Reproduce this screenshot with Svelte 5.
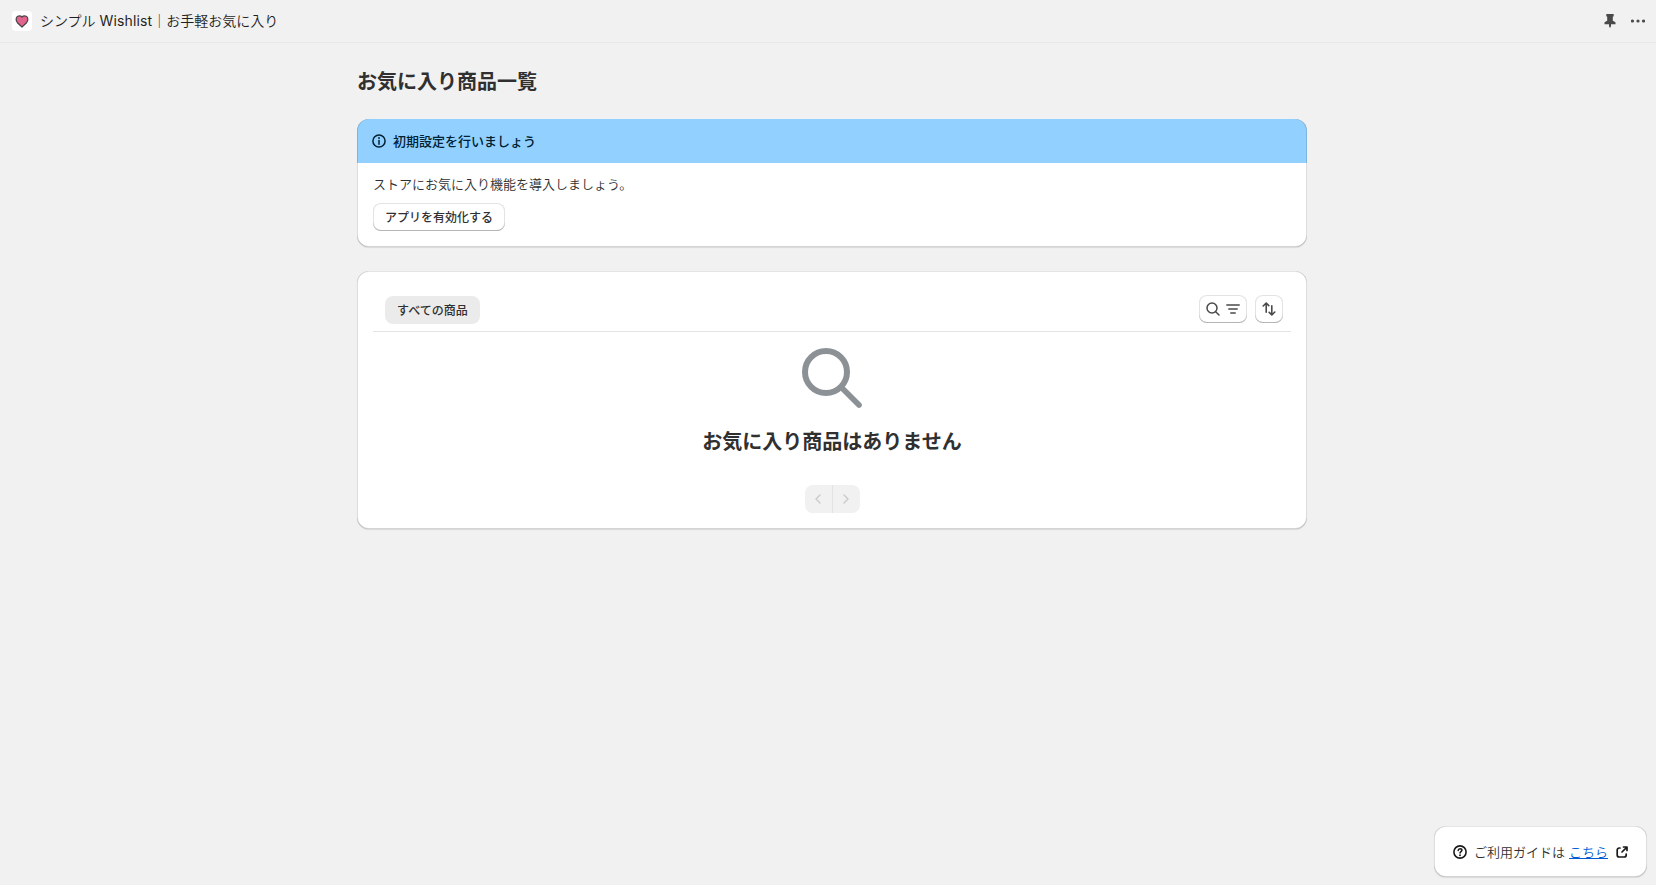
<script lang="ts">
	let selected = $state(0);
	const tabs = ['すべての商品'];
</script>

<header class="topbar">
	<div class="app-name">
		<span class="app-icon">
			<svg viewBox="0 0 20 20" width="20" height="20">
				<path
					d="M10 16 L5.4 11.7 C3.6 9.600 3.700 6.300 5.800 5.300 C7.500 4.600 9.100 5.100 10 6 C10.900 5.100 12.500 4.600 14.200 5.300 C16.300 6.300 16.400 9.600 14.600 11.700 Z"
					fill="#e0648c"
					stroke="#484348"
					stroke-width="1.2"
					stroke-linejoin="round"
				/>
			</svg>
		</span>
		<span class="app-title">シンプル <span class="latin">Wishlist</span>｜お手軽お気に入り</span>
	</div>
	<div class="top-actions">
		<svg viewBox="0 0 12 16" width="12" height="16" fill="#4a4a4a">
			<path
				d="M2.3 1h7.4v2.2l-.9.5v4l2.3 1.4c.3.2.4.5.4.8v1.4H7v1.9l-1 1.9-1-1.9v-1.9H.5V9.900c0-.3.1-.6.4-.8l2.3-1.4v-4l-.9-.5z"
			/>
		</svg>
		<svg viewBox="0 0 14 4" width="14" height="4" fill="#4a4a4a">
			<circle cx="1.5" cy="2" r="1.6" />
			<circle cx="7" cy="2" r="1.6" />
			<circle cx="12.500" cy="2" r="1.6" />
		</svg>
	</div>
</header>

<main class="page">
	<h1>お気に入り商品一覧</h1>

	<section class="card banner">
		<div class="banner-head">
			<svg viewBox="0 0 14 14" width="14" height="14" fill="none" stroke="#002133" stroke-width="1.5">
				<circle cx="7" cy="7" r="6.1" />
				<path d="M7 6.400v3.900" stroke-linecap="round" />
				<circle cx="7" cy="4" r=".9" fill="#002133" stroke="none" />
			</svg>
			<h2>初期設定を行いましょう</h2>
		</div>
		<div class="banner-body">
			<p>ストアにお気に入り機能を導入しましょう。</p>
			<button class="btn enable">アプリを有効化する</button>
		</div>
	</section>

	<section class="card list">
		<div class="filters">
			<div class="tabs">
				{#each tabs as tab, i}
					<button class="tab" class:active={selected === i} onclick={() => (selected = i)}>{tab}</button>
				{/each}
			</div>
			<div class="tools">
				<button class="btn search" aria-label="検索と絞り込み">
					<svg viewBox="0 0 14 14" width="14" height="14" fill="none" stroke="#4a4a4a" stroke-width="1.5" stroke-linecap="round">
						<circle cx="6" cy="6" r="5" />
						<path d="M9.700 9.700l3.300 3.300" />
					</svg>
					<svg viewBox="0 0 14 10" width="14" height="10" fill="none" stroke="#4a4a4a" stroke-width="1.5" stroke-linecap="round">
						<path d="M.8 1h12.400M2.800 5h8.400M4.800 9h4.400" />
					</svg>
				</button>
				<button class="btn sort" aria-label="並べ替え">
					<svg viewBox="0 0 14 14" width="14" height="14" fill="none" stroke="#4a4a4a" stroke-width="1.6" stroke-linecap="round" stroke-linejoin="round">
						<path d="M1.200 4l3-3 2.600 2.600M4.200 1.500v8.700M12.800 10l-3 3-2.600-2.600M9.800 12.500V3.800" />
					</svg>
				</button>
			</div>
		</div>

		<div class="empty">
			<svg viewBox="0 0 60 60" width="60" height="60" fill="none" stroke="#8c9196" stroke-width="6" stroke-linecap="round">
				<circle cx="24" cy="24" r="21" />
				<path d="M40 40l17 17" stroke-width="5.600" />
			</svg>
			<p>お気に入り商品はありません</p>
		</div>

		<div class="pagination">
			<button disabled aria-label="前へ">
				<svg viewBox="0 0 6 10" width="6" height="10"><path d="M5 1L1 5l4 4" /></svg>
			</button>
			<button disabled aria-label="次へ">
				<svg viewBox="0 0 6 10" width="6" height="10"><path d="M1 1l4 4-4 4" /></svg>
			</button>
		</div>
	</section>
</main>

<aside class="card guide">
	<svg class="help" viewBox="0 0 14 14" width="14" height="14" fill="none" stroke="#1a1a1a" stroke-width="1.6" stroke-linecap="round">
		<circle cx="7" cy="7" r="6.100" />
		<path d="M5.200 5.500c.1-1.200.8-1.800 1.900-1.800 1 0 1.800.6 1.800 1.600 0 1.300-1.800 1.300-1.800 2.600" />
		<circle cx="7" cy="10.200" r=".95" fill="#1a1a1a" stroke="none" />
	</svg>
	<span>ご利用ガイドは</span>
	<a href="#guide">こちら</a>
	<svg class="external" viewBox="0 0 12 12" width="12" height="12" fill="none" stroke="#1a1a1a" stroke-width="1.700" stroke-linecap="round" stroke-linejoin="round">
		<path d="M4 2H3.200A2 2 0 0 0 1.200 4V9a2 2 0 0 0 2 2h5a2 2 0 0 0 2-2V8M7.500 1h3.500v3.500M10.700 1.300L6 6" />
	</svg>
</aside>

<style>
	:global(body) {
		background: #f1f1f1;
		color: #303030;
		font-family: Inter, 'Noto Sans CJK JP', sans-serif;
		font-size: 13px;
		line-height: 20px;
	}

	:global(#app) {
		height: 100vh;
		box-sizing: border-box;
		display: flex;
		flex-direction: column;
	}

	h1,
	h2,
	p {
		margin: 0;
	}

	svg {
		display: block;
		flex: none;
	}

	button {
		margin: 0;
		padding: 0;
		border: 0;
		font: inherit;
		color: inherit;
		display: flex;
		align-items: center;
		justify-content: center;
	}

	.topbar {
		display: flex;
		justify-content: space-between;
		height: 42px;
		padding: 0 11px 0 12px;
		align-items: center;
		border-bottom: 1px solid #e8e8e8;
	}

	.app-name {
		display: flex;
		gap: 8px;
		align-items: center;
	}

	.app-icon {
		background: #fff;
		border-radius: 4px;
	}

	.app-title {
		font-size: 14px;
		font-weight: 350;
		color: #1f1f1f;
	}

	.latin {
		font-weight: 400;
		letter-spacing: 0.15px;
	}

	.top-actions {
		display: flex;
		align-items: center;
		gap: 15px;
	}

	.page {
		width: 950px;
		margin: 0 0 0 357px;
		padding-top: 25px;
	}

	h1 {
		font-size: 20px;
		line-height: 28px;
		font-weight: 600;
	}

	.card {
		background: #fff;
		border-radius: 12px;
		box-shadow:
			0 1px 1px #0000001a,
			inset 1px 0 0 #00000021,
			inset -1px 0 0 #00000021,
			inset 0 -1px 0 #0000002b,
			inset 0 1px 0 #0000001a;
	}

	.banner {
		margin-top: 23px;
		height: 128px;
	}

	.banner-head {
		display: flex;
		align-items: center;
		gap: 7px;
		height: 44px;
		padding-left: 15px;
		box-sizing: border-box;
		background: #91d0ff;
		border-radius: 12px 12px 0 0;
		box-shadow:
			inset 1px 0 0 #00000021,
			inset -1px 0 0 #00000021;
	}

	h2 {
		font-size: 13px;
		font-weight: 500;
		color: #002133;
	}

	.banner-body {
		padding: 11px 16px;
	}

	.banner-body p {
		font-weight: 350;
		margin-bottom: 9px;
	}

	.btn {
		height: 28px;
		padding: 0 12px;
		border-radius: 8px;
		background: #fff;
		font-size: 12px;
		font-weight: 500;
		box-shadow:
			inset 0 -1px 0 #b5b5b5,
			inset 0 0 0 1px #e3e3e3;
	}

	.enable {
		padding-top: 2px;
	}

	.list {
		margin-top: 24px;
		height: 258px;
		padding: 16px;
		box-sizing: border-box;
	}

	.filters {
		display: flex;
		justify-content: space-between;
		padding: 8px 8px 8px 12px;
		border-bottom: 1px solid #e3e3e3;
	}

	.tabs {
		display: flex;
		padding-top: 1px;
		margin-bottom: -1px;
	}

	.tab {
		height: 28px;
		padding: 1px 12px 0;
		background: transparent;
		border-radius: 8px;
		font-size: 12px;
		font-weight: 500;
	}

	.tab.active {
		background: #ebebeb;
	}

	.tools {
		display: flex;
		gap: 8px;
	}

	.search {
		width: 48px;
		padding: 0;
		gap: 6px;
	}

	.sort {
		width: 28px;
		padding: 0;
	}

	.empty {
		display: flex;
		flex-direction: column;
		align-items: center;
		padding-top: 16px;
	}

	.empty p {
		margin-top: 20px;
		font-size: 20px;
		line-height: 28px;
		font-weight: 600;
	}

	.pagination {
		display: flex;
		justify-content: center;
		gap: 1px;
		margin-top: 29px;
	}

	.pagination button {
		width: 27px;
		height: 28px;
		background: #f1f1f1;
	}

	.pagination button:first-child {
		border-radius: 8px 0 0 8px;
		box-shadow: 1px 0 0 #e3e3e3;
	}

	.pagination button:last-child {
		border-radius: 0 8px 8px 0;
	}

	.pagination path {
		fill: none;
		stroke: #cccccc;
		stroke-width: 1.5;
		stroke-linecap: round;
		stroke-linejoin: round;
	}

	.guide {
		display: flex;
		align-items: center;
		width: 213px;
		height: 51px;
		box-sizing: border-box;
		padding-left: 19px;
		margin: auto 9px 8px auto;
		font-weight: 350;
	}

	.guide span {
		margin: 0 4px 0 7px;
	}

	.guide a {
		color: #005bd3;
	}

	.external {
		margin-left: 8px;
	}
</style>
